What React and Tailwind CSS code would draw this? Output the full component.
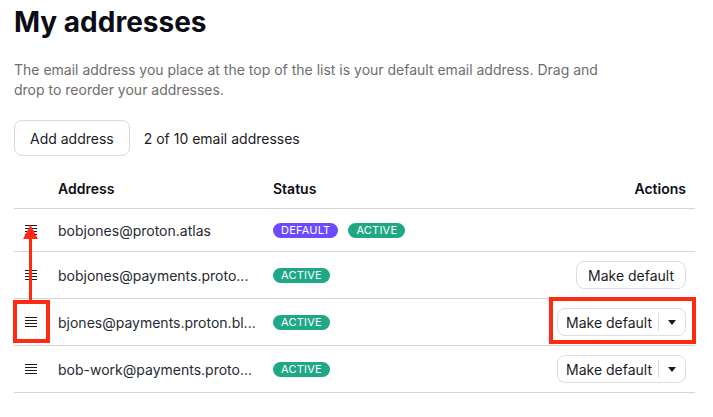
import React from 'react';

const font = { fontFamily: 'Inter, "Noto Sans", sans-serif' };

const addresses = [
  { email: 'bobjones@proton.atlas', isDefault: true, action: null },
  { email: 'bobjones@payments.proto...', isDefault: false, action: 'plain' },
  { email: 'bjones@payments.proton.bl...', isDefault: false, action: 'split' },
  { email: 'bob-work@payments.proto...', isDefault: false, action: 'split' },
];

const DragHandle = () => (
  <svg width="14" height="12" viewBox="0 0 14 12" className="text-[#1b1b1f]">
    <path d="M1 1.5h12M1 4.5h12M1 7.5h12M1 10.5h12" stroke="currentColor" strokeWidth="1" />
  </svg>
);

const Badge = ({ children, color }) => (
  <span className={`inline-flex h-[15px] items-center rounded-full px-[8px] text-[11px] leading-none tracking-[0.02em] text-white ${color}`}>
    {children}
  </span>
);

const Actions = ({ type }) => {
  if (type === 'plain') {
    return (
      <button className="h-[28px] rounded-[8px] border border-[#dedede] bg-white px-[11px] text-[14px] text-[#1b1b1f]">
        Make default
      </button>
    );
  }
  if (type === 'split') {
    return (
      <div className="flex h-[28px] items-center rounded-[8px] border border-[#dedede] bg-white text-[14px] text-[#1b1b1f]">
        <span className="pl-[8px] pr-[6px]">Make default</span>
        <span className="h-[18px] w-px bg-[#dedede]" />
        <span className="flex w-[26px] justify-center">
          <svg width="8" height="5" viewBox="0 0 8 5">
            <path d="M0 0h8L4 5z" fill="#1b1b1f" />
          </svg>
        </span>
      </div>
    );
  }
  return null;
};

const App = () => {
  return (
    <div className="relative h-[417px] w-[713px] overflow-hidden bg-white" style={font}>
      <div className="w-[695px] pl-[14px]">
        <h1 className="mt-[5px] h-[34px] text-[28px] font-bold leading-[34px] text-[#0c0c14]">My addresses</h1>

        <p className="mt-[21px] max-w-[615px] text-[14px] leading-[20px] text-[#706d6b]">
          The email address you place at the top of the list is your default email address. Drag and drop to reorder your addresses.
        </p>

        <div className="mt-[20px] flex items-center gap-[14px]">
          <button className="h-[36px] rounded-[8px] border border-[#d9d9d9] bg-white px-[15px] text-[14px] text-[#1b1b1f]">
            Add address
          </button>
          <span className="text-[14px] text-[#1b1b1f]">2 of 10 email addresses</span>
        </div>

        <div className="mt-[13px]">
          <div className="grid h-[40px] grid-cols-[44px_215px_1fr_auto] items-center border-b border-[#d6d6d6] text-[14px] font-semibold text-[#0c0c14]">
            <span />
            <span>Address</span>
            <span>Status</span>
            <span className="pr-[9px] text-right">Actions</span>
          </div>

          {addresses.map((a, i) => (
            <div
              key={a.email}
              className={`grid grid-cols-[44px_215px_1fr_auto] items-center border-b border-[#d6d6d6] text-[14px] text-[#262a33] ${i === 0 ? 'h-[43px]' : 'h-[47px]'}`}
            >
              <span className="flex pl-[10px]">
                <DragHandle />
              </span>
              <span className="truncate">{a.email}</span>
              <span className="flex items-center gap-[10px]">
                {a.isDefault && <Badge color="bg-[#6d4aff]">DEFAULT</Badge>}
                <Badge color="bg-[#1ea885]">ACTIVE</Badge>
              </span>
              <span className="flex justify-end pr-[9px]">
                <Actions type={a.action} />
              </span>
            </div>
          ))}
        </div>
      </div>

      {/* annotation: arrow from 3rd row handle up to the top */}
      <div className="absolute left-[29px] top-[236px] h-[64px] w-[3px] bg-[#ff2a12]" />
      <svg className="absolute left-[23px] top-[225px]" width="15" height="14" viewBox="0 0 15 14">
        <path d="M7.5 0L15 14H0z" fill="#ff2a12" />
      </svg>
      <div className="absolute left-[13px] top-[300px] h-[43px] w-[37px] border-[4px] border-[#ff2a12]" />
      <div className="absolute left-[549px] top-[297px] h-[47px] w-[147px] border-[4px] border-[#ff2a12]" />
    </div>
  );
};

export default App;
